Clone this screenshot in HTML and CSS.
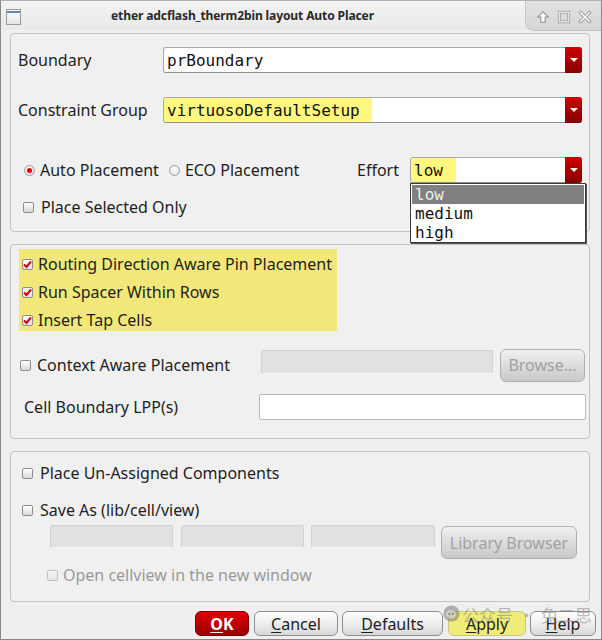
FILE: index.html
```html
<!DOCTYPE html>
<html>
<head>
<meta charset="utf-8">
<link rel="stylesheet" href="styles.css">
</head>
<body>
<div class="window">
  <div class="titlebar">
    <div class="ticon"><div class="ticon-bar"></div></div>
    <div class="ttitle">ether adcflash_therm2bin layout Auto Placer</div>
    <div class="tbtns">
      <svg width="14" height="14" viewBox="0 0 16 16"><path d="M8 2 L14 8 L10.5 8 L10.5 14 L5.5 14 L5.5 8 L2 8 Z" fill="#fbfbfb" stroke="#8c8c8c" stroke-width="1.2"/></svg>
      <svg width="14" height="14" viewBox="0 0 16 16"><rect x="2.5" y="2.5" width="11" height="11" fill="none" stroke="#8c8c8c" stroke-width="3"/><rect x="2.5" y="2.5" width="11" height="11" fill="none" stroke="#fbfbfb" stroke-width="1.4"/></svg>
      <svg width="14" height="14" viewBox="0 0 16 16"><path d="M3 3 L13 13 M13 3 L3 13" stroke="#8c8c8c" stroke-width="3.6" stroke-linecap="square"/><path d="M3 3 L13 13 M13 3 L3 13" stroke="#fbfbfb" stroke-width="1.8" stroke-linecap="square"/></svg>
    </div>
  </div>

  <div class="content">
    <div class="group g1">
      <div class="row row-b">
        <span class="label">Boundary</span>
        <div class="combo wide"><span class="ctext">prBoundary</span><span class="carrow"></span></div>
      </div>
      <div class="row row-c">
        <span class="label">Constraint Group</span>
        <div class="combo wide"><span class="ctext hl">virtuosoDefaultSetup</span><span class="carrow"></span></div>
      </div>
      <div class="row row-r">
        <span class="radio on"></span><span class="rtext">Auto Placement</span>
        <span class="radio eco"></span><span class="rtext">ECO Placement</span>
        <span class="effort-label">Effort</span>
        <div class="combo effort"><span class="ctext hl hl-low">low</span><span class="carrow"></span>
          <div class="popup">
            <div class="pitem sel">low</div>
            <div class="pitem">medium</div>
            <div class="pitem">high</div>
          </div>
        </div>
      </div>
      <div class="row row-s">
        <span class="check"></span><span class="ctxt">Place Selected Only</span>
      </div>
    </div>

    <div class="group g2">
      <div class="yellow">
        <div class="yrow"><span class="check on"><svg width="11" height="11" viewBox="0 0 11 11"><path d="M2 5.5 L4.5 8 L9 2.5" fill="none" stroke="#d40000" stroke-width="2"/></svg></span><span class="ctxt">Routing Direction Aware Pin Placement</span></div>
        <div class="yrow"><span class="check on"><svg width="11" height="11" viewBox="0 0 11 11"><path d="M2 5.5 L4.5 8 L9 2.5" fill="none" stroke="#d40000" stroke-width="2"/></svg></span><span class="ctxt">Run Spacer Within Rows</span></div>
        <div class="yrow"><span class="check on"><svg width="11" height="11" viewBox="0 0 11 11"><path d="M2 5.5 L4.5 8 L9 2.5" fill="none" stroke="#d40000" stroke-width="2"/></svg></span><span class="ctxt">Insert Tap Cells</span></div>
      </div>
      <div class="row row-ctx">
        <span class="check"></span><span class="ctxt ctx-label">Context Aware Placement</span>
        <div class="field dis ctx-field"></div>
        <div class="btn dis browse">Browse...</div>
      </div>
      <div class="row row-lpp">
        <span class="lpp-label">Cell Boundary LPP(s)</span>
        <div class="field lpp-field"></div>
      </div>
    </div>

    <div class="group g3">
      <div class="row row-ua">
        <span class="check"></span><span class="ctxt">Place Un-Assigned Components</span>
      </div>
      <div class="row row-sa">
        <span class="check"></span><span class="ctxt">Save As (lib/cell/view)</span>
      </div>
      <div class="row row-f">
        <div class="field dis sf"></div>
        <div class="field dis sf sf2"></div>
        <div class="field dis sf sf3"></div>
        <div class="btn dis libbtn">Library Browser</div>
      </div>
      <div class="row row-open">
        <span class="check dischk"></span><span class="ctxt distext">Open cellview in the new window</span>
      </div>
    </div>

    <div class="buttons">
      <div class="btn ok"><u>O</u>K</div>
      <div class="btn cancel"><u>C</u>ancel</div>
      <div class="btn defaults"><u>D</u>efaults</div>
      <div class="btn apply"><u>A</u>pply</div>
      <div class="btn help"><u>H</u>elp</div>
    </div>
  </div>

  <div class="watermark">
    <svg class="wm-icon" width="17" height="17" viewBox="0 0 20 20"><circle cx="10" cy="10" r="9.5" fill="rgba(110,110,110,0.5)"/><ellipse cx="9.5" cy="11" rx="6" ry="5" fill="rgba(235,235,235,0.55)"/><circle cx="7.5" cy="10.5" r="1.1" fill="rgba(90,90,90,0.8)"/><circle cx="11.5" cy="10.5" r="1.1" fill="rgba(90,90,90,0.8)"/></svg>
    <span class="wm-t1">公众号</span><span class="wm-dot">·</span><span class="wm-t2">兔二思</span>
  </div>
</div>
</body>
</html>
```

FILE: styles.css
```css
html, body {
  margin: 0;
  padding: 0;
}
body {
  background: #efefef;
  font-family: "Noto Sans", "Noto Sans CJK SC", sans-serif;
  font-size: 16px;
  color: #1e1e1e;
  white-space: nowrap;
}
.window {
  position: relative;
  width: 602px;
  height: 640px;
  box-sizing: border-box;
  border: 1px solid #8a8a8a;
  border-top: 1px solid #b0b0b0;
  background: #efefef;
  overflow: hidden;
}

/* title bar */
.titlebar {
  height: 29px;
  display: flex;
  align-items: center;
  background: linear-gradient(#f3f3f3, #e9e9e9);
}
.ticon {
  width: 15px;
  height: 16px;
  margin-left: 5px;
  box-sizing: border-box;
  border: 1px solid #9a9a9a;
  background: linear-gradient(#ffffff, #e4e4e4);
  margin-top: 2px;
}
.ticon-bar {
  height: 2px;
  margin: 1px 0 0 0;
  background: #5a86c8;
}
.ttitle {
  margin-left: 90px;
  font-size: 12.1px;
  font-weight: 700;
  color: #2a2a2a;
  letter-spacing: -0.15px;
}
.tbtns {
  margin-left: auto;
  align-self: stretch;
  width: 76px;
  box-sizing: border-box;
  display: flex;
  align-items: center;
  justify-content: space-between;
  padding: 2px 9px 0 10px;
  background: linear-gradient(#e2e2e2, #d6d6d6);
  border-left: 1px solid #c4c4c4;
  border-bottom: 1px solid #c4c4c4;
  border-bottom-left-radius: 9px;
  margin-bottom: -1px;
}

/* content */
.content {
  padding: 3px 11px 0 9px;
}
.group {
  box-sizing: border-box;
  border: 1px solid #c2c2c2;
  border-radius: 4px;
  background: #f0f0f0;
  display: flex;
  flex-direction: column;
}
.row {
  display: flex;
  align-items: center;
}
.g1 {
  height: 199px;
  padding: 0 7px;
}
.label {
  width: 145px;
  flex: none;
}
.row-b { margin-top: 13px; height: 26px; }
.row-c { margin-top: 24px; height: 26px; }
.row-r { margin-top: 34px; height: 26px; }
.row-s { margin-top: 14px; height: 20px; padding-left: 5px; }

.combo {
  position: relative;
  height: 26px;
  box-sizing: border-box;
  border: 1px solid #a9a9a9;
  border-bottom-color: #8f8f8f;
  border-radius: 3px;
  background: #fff;
  display: flex;
  align-items: stretch;
  font-family: "DejaVu Sans Mono", monospace;
  font-size: 16px;
  color: #111;
}
.combo.wide { flex: 1; }
.ctext {
  padding-left: 3px;
  padding-right: 2px;
  display: flex;
  align-items: center;
  border-radius: 2px 0 0 2px;
}
.ctext.hl {
  background: #fff77e;
  padding-right: 12px;
}
.ctext.hl-low {
  padding-left: 3px;
  padding-right: 13px;
}
.carrow {
  margin-left: auto;
  width: 17px;
  margin-top: -1px;
  margin-bottom: -1px;
  margin-right: -1px;
  border-radius: 0 3px 3px 0;
  background: linear-gradient(#d30000, #a00000 60%, #860000);
  position: relative;
}
.carrow::after {
  content: "";
  position: absolute;
  left: 5px;
  top: 11px;
  border-left: 4px solid transparent;
  border-right: 4px solid transparent;
  border-top: 4px solid #fff;
}

.radio {
  width: 11px;
  height: 11px;
  box-sizing: border-box;
  border-radius: 50%;
  border: 1px solid #9c9c9c;
  background: radial-gradient(circle at 50% 35%, #ffffff, #dcdcdc);
  margin-left: 6px;
  position: relative;
  flex: none;
}
.radio.on::after {
  content: "";
  position: absolute;
  left: 2px;
  top: 2px;
  width: 5px;
  height: 5px;
  border-radius: 50%;
  background: #e00000;
}
.radio.eco { margin-left: 10px; }
.rtext { margin-left: 5px; flex: none; }
.effort-label { margin-left: auto; flex: none; }
.combo.effort {
  margin-left: 11px;
  width: 172px;
  flex: none;
}
.popup {
  position: absolute;
  left: -1px;
  top: 25px;
  width: 176px;
  height: 60px;
  box-sizing: border-box;
  border: 1px solid #3a3a3a;
  box-shadow: 1px 1px 0 #555;
  background: #fff;
  padding-top: 1px;
  z-index: 5;
}
.pitem {
  height: 19px;
  line-height: 19px;
  padding-left: 4px;
  color: #111;
}
.pitem.sel {
  background: #808080;
  color: #efefef;
  margin: 0 1px;
  padding-left: 3px;
}

.check {
  width: 11px;
  height: 11px;
  box-sizing: border-box;
  border: 1px solid #8e8e8e;
  border-radius: 2px;
  background: linear-gradient(#ffffff, #d9d9d9);
  flex: none;
  display: flex;
  align-items: center;
  justify-content: center;
}
.check.on {
  background: linear-gradient(#ffffff, #e4e4e4);
}
.check.on svg { margin: -1px; }
.ctxt { margin-left: 7px; flex: none; }

/* group 2 */
.g2 {
  margin-top: 12px;
  height: 195px;
}
.yellow {
  margin: 4px 0 0 8px;
  width: 318px;
  height: 82px;
  background: #f1e879;
  display: flex;
  flex-direction: column;
  padding-top: 1px;
  box-sizing: border-box;
}
.yrow {
  height: 28px;
  flex: none;
  display: flex;
  align-items: center;
  padding-left: 3px;
}
.yrow .ctxt { margin-left: 5px; }
.row-ctx {
  margin-top: 18px;
  height: 32px;
  padding-left: 9px;
}
.ctx-label { margin-left: 6px; width: 224px; }
.field {
  box-sizing: border-box;
  border: 1px solid #b9b9b9;
  border-radius: 2px;
  background: #fff;
  flex: none;
}
.field.dis {
  background: #e1e1e1;
  border-color: #d2d2d2;
  border-bottom-color: #f6f6f6;
}
.ctx-field {
  width: 232px;
  height: 24px;
  align-self: flex-start;
  margin-top: 1px;
}
.btn {
  box-sizing: border-box;
  border: 1px solid #8c8c8c;
  border-radius: 6px;
  background: linear-gradient(#ffffff, #f0f0f0 45%, #d8d8d8);
  display: flex;
  align-items: center;
  justify-content: center;
  flex: none;
  color: #1e1e1e;
}
.btn.dis {
  color: #a2a2a2;
  border-color: #b0b0b0;
  background: linear-gradient(#f0f0f0, #dcdcdc 50%, #c9c9c9);
}
.browse {
  margin-left: 7px;
  width: 85px;
  height: 33px;
}
.row-lpp {
  margin-top: 13px;
  height: 26px;
}
.lpp-label {
  margin-left: 13px;
  width: 235px;
  flex: none;
}
.lpp-field {
  width: 327px;
  height: 26px;
}

/* group 3 */
.g3 {
  margin-top: 12px;
  height: 151px;
}
.row-ua {
  margin-top: 11px;
  height: 20px;
  padding-left: 11px;
}
.row-sa {
  margin-top: 17px;
  height: 20px;
  padding-left: 11px;
}
.row-f {
  margin-top: 5px;
  height: 33px;
  align-items: flex-start;
  padding-left: 39px;
}
.sf {
  width: 123px;
  height: 23px;
}
.sf2 { margin-left: 8px; }
.sf3 { margin-left: 7px; width: 124px; }
.libbtn {
  margin-left: 6px;
  width: 136px;
  height: 33px;
  margin-top: 1px;
}
.row-open {
  margin-top: 7px;
  height: 20px;
  padding-left: 36px;
}
.check.dischk {
  border-color: #c3c3c3;
  background: linear-gradient(#f6f6f6, #e4e4e4);
}
.distext {
  color: #9a9a9a;
  margin-left: 5px;
}

/* bottom buttons */
.buttons {
  margin-top: 9px;
  margin-right: -6px;
  display: flex;
  justify-content: flex-end;
  gap: 5px;
}
.buttons .btn {
  height: 25px;
  font-size: 16px;
}
.ok {
  width: 54px;
  background: linear-gradient(#e00000, #c00000 45%, #9a0000);
  border-color: #7a0000;
  color: #fff;
  font-weight: 700;
}
.cancel { width: 84px; }
.defaults { width: 101px; margin-left: -1px; }
.apply {
  width: 78px;
  background: #f0ec78;
  border-color: #c9c58a;
}
.help { width: 66px; margin-left: -1px; }
.buttons u {
  text-decoration-thickness: 1px;
  text-underline-offset: 2px;
}

/* watermark */
.watermark {
  position: absolute;
  left: 442px;
  top: 601px;
  display: flex;
  align-items: center;
  color: rgba(125, 125, 125, 0.5);
  font-family: "Noto Sans CJK SC", sans-serif;
  font-size: 17px;
  pointer-events: none;
  white-space: nowrap;
}
.wm-icon { margin-top: -2px; flex: none; }
.wm-t1 { margin-left: 2px; }
.wm-dot { margin-left: 5px; }
.wm-t2 { margin-left: 6px; }
```
